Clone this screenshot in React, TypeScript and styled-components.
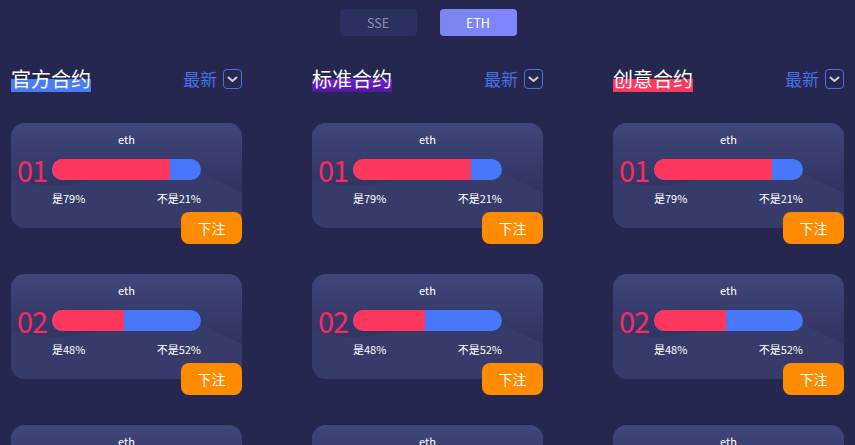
import React from "react";
import styled, { createGlobalStyle } from "styled-components";

const Global = createGlobalStyle`
  html, body { margin: 0; padding: 0; background: #25274e; }
  body { font-family: "Noto Sans CJK SC", "Noto Sans", sans-serif; }
  * { box-sizing: border-box; }
`;

const Page = styled.div`
  width: 855px;
  height: 445px;
  overflow: hidden;
  background: #25274e;
  padding: 9px 11px 0;
`;

const Tabs = styled.div`
  display: flex;
  justify-content: center;
  gap: 23px;
  padding-left: 1px;
`;

const Tab = styled.div<{ $active?: boolean }>`
  width: 77px;
  height: 27px;
  border-radius: 4px;
  display: flex;
  align-items: center;
  justify-content: center;
  font-size: 12.5px;
  color: ${(p) => (p.$active ? "#ffffff" : "#8a90b4")};
  background: ${(p) =>
    p.$active ? "linear-gradient(90deg, #7a86ee, #8184fe)" : "#2c3060"};
`;

const Columns = styled.div`
  display: grid;
  grid-template-columns: repeat(3, 231px);
  column-gap: 70px;
  margin-top: 30px;
`;

const Column = styled.div`
  display: flex;
  flex-direction: column;
`;

const Header = styled.div`
  display: flex;
  align-items: center;
  justify-content: space-between;
  height: 26px;
  margin-bottom: 31px;
`;

const Title = styled.span<{ $from: string; $to: string }>`
  font-size: 20px;
  line-height: 26px;
  color: #ffffff;
  background: linear-gradient(
    to bottom,
    transparent 50%,
    ${(p) => p.$from} 50%,
    ${(p) => p.$to} 100%
  );
`;

const Sort = styled.div`
  display: flex;
  align-items: center;
  gap: 6px;
  color: #4a6fea;
  font-size: 17px;
  line-height: 22px;
`;

const ChevronBox = styled.div`
  width: 19px;
  height: 20px;
  border: 1.5px solid #4a6fea;
  border-radius: 4px;
  display: flex;
  align-items: center;
  justify-content: center;
`;

const Item = styled.div`
  position: relative;
  height: 105px;
  margin-bottom: 46px;
`;

const Card = styled.div`
  position: relative;
  height: 105px;
  border-radius: 14px;
  overflow: hidden;
  background: #373b69;
`;

const Wave = styled.svg`
  position: absolute;
  inset: 0;
  width: 100%;
  height: 100%;
`;

const CardBody = styled.div`
  position: relative;
  display: flex;
  flex-direction: column;
  padding-top: 8px;
`;

const Coin = styled.div`
  text-align: center;
  color: #ffffff;
  font-size: 11px;
  line-height: 16px;
`;

const BarRow = styled.div`
  display: flex;
  align-items: center;
  margin-top: 12px;
  padding-left: 6px;
  height: 21px;
`;

const Rank = styled.span`
  width: 35px;
  font-size: 29px;
  font-weight: 400;
  line-height: 21px;
  color: #f72a63;
  letter-spacing: -1px;
`;

const Bar = styled.div`
  display: flex;
  width: 149px;
  height: 21px;
  border-radius: 11px;
  overflow: hidden;
  background: #4778fb;
`;

const YesPart = styled.div`
  height: 100%;
  background: #fe375f;
`;

const Labels = styled.div`
  display: flex;
  justify-content: space-between;
  width: 149px;
  margin-left: 41px;
  margin-top: 10px;
  color: #ffffff;
  font-size: 11px;
  line-height: 16px;
`;

const BetButton = styled.button`
  position: absolute;
  right: 0;
  bottom: -16px;
  width: 61px;
  height: 32px;
  border: none;
  border-radius: 8px;
  background: #ff8c00;
  color: #ffffff;
  font-family: inherit;
  font-size: 14px;
  padding: 0;
`;

type Entry = { rank: string; yes: number };

const entries: Entry[] = [
  { rank: "01", yes: 79 },
  { rank: "02", yes: 48 },
  { rank: "03", yes: 60 },
];

const columns = [
  { title: "官方合约", from: "#4a7cf6", to: "#4a7cf6" },
  { title: "标准合约", from: "#6c22d8", to: "#52199e" },
  { title: "创意合约", from: "#fb3a5e", to: "#fb3a5e" },
];

const Chevron = () => (
  <svg width="11" height="7" viewBox="0 0 11 7">
    <path
      d="M1.5 1.5 L5.5 5 L9.5 1.5"
      stroke="#c9cde6"
      strokeWidth="2"
      fill="none"
      strokeLinecap="round"
      strokeLinejoin="round"
    />
  </svg>
);

const CardWave = ({ id }: { id: string }) => (
  <Wave viewBox="0 0 231 105" preserveAspectRatio="none">
    <defs>
      <linearGradient id={id} x1="0" y1="0" x2="0" y2="1">
        <stop offset="0" stopColor="#40467a" />
        <stop offset="1" stopColor="#30335f" />
      </linearGradient>
    </defs>
    <path
      d="M0 0 H231 V70 L189 50 C150 44 120 50 89 56 C60 62 40 68 0 56 Z"
      fill={`url(#${id})`}
    />
  </Wave>
);

export default function App() {
  return (
    <>
      <Global />
      <Page>
        <Tabs>
          <Tab>SSE</Tab>
          <Tab $active>ETH</Tab>
        </Tabs>
        <Columns>
          {columns.map((col, ci) => (
            <Column key={col.title}>
              <Header>
                <Title $from={col.from} $to={col.to}>
                  {col.title}
                </Title>
                <Sort>
                  最新
                  <ChevronBox>
                    <Chevron />
                  </ChevronBox>
                </Sort>
              </Header>
              {entries.map((e, i) => (
                <Item key={e.rank}>
                  <Card>
                    <CardWave id={`w${ci}${i}`} />
                    <CardBody>
                      <Coin>eth</Coin>
                      <BarRow>
                        <Rank>{e.rank}</Rank>
                        <Bar>
                          <YesPart style={{ width: `${e.yes}%` }} />
                        </Bar>
                      </BarRow>
                      <Labels>
                        <span>是{e.yes}%</span>
                        <span>不是{100 - e.yes}%</span>
                      </Labels>
                    </CardBody>
                  </Card>
                  <BetButton>下注</BetButton>
                </Item>
              ))}
            </Column>
          ))}
        </Columns>
      </Page>
    </>
  );
}
